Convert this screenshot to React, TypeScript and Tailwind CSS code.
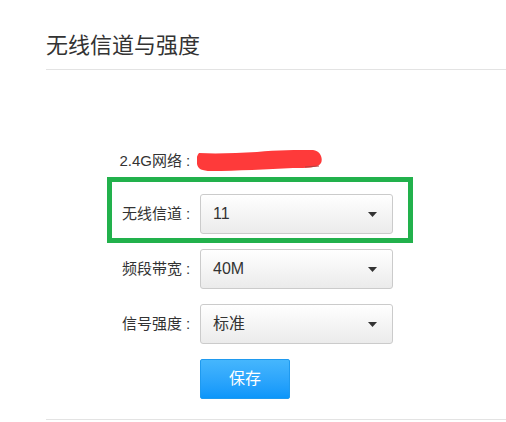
import React from "react";

const font = { fontFamily: '"Liberation Sans", "Noto Sans CJK SC", sans-serif' };

function Caret() {
  return (
    <svg width="9" height="5" viewBox="0 0 9 5" className="shrink-0">
      <path d="M0 0 H9 L4.5 5 Z" fill="#333" />
    </svg>
  );
}

function SelectBox({ value }: { value: string }) {
  return (
    <div className="w-[193px] h-[40px] border border-[#cbcbcb] rounded-[3px] bg-gradient-to-b from-white to-[#ebebeb] flex items-center justify-between pl-[12px] pr-[15px] text-[16px] text-[#333]">
      <span>{value}</span>
      <Caret />
    </div>
  );
}

function Row({ label, children }: { label: string; children: React.ReactNode }) {
  return (
    <div className="flex items-center h-[40px]">
      <div className="w-[154px] flex justify-end pr-[6px] text-[15px] text-[#333]">
        <span>{label}</span>
        <span className="w-[12px] text-center">:</span>
      </div>
      {children}
    </div>
  );
}

export default function App() {
  return (
    <div className="w-[506px] h-[422px] bg-white overflow-hidden pl-[46px]" style={font}>
      <div className="pt-[31px] pb-[8px] border-b border-[#e3e3e3]">
        <h1 className="text-[22px] leading-[30px] text-[#333] font-normal">无线信道与强度</h1>
      </div>

      <div className="mt-[71px] flex flex-col">
        <Row label="2.4G网络">
          {/* redacted network name */}
          <svg width="126" height="22" viewBox="0 0 126 22" className="-ml-[3px]">
            <path
              d="M2 3 C20 4 40 3 60 2 C80 0 100 0 116 0 C124 1 126 9 124 13 C121 18 110 18 96 18 C70 19 40 21 14 21 C5 21 1 19 0 14 C-1 9 0 5 2 3 Z"
              fill="#fe3a3a"
            />
            <path d="M108 17 L122 16" stroke="#b04040" strokeWidth="1" />
          </svg>
        </Row>

        <div className="relative mt-[13px]">
          <Row label="无线信道">
            <SelectBox value="11" />
          </Row>
          <div className="absolute left-[61px] top-[-17px] w-[306px] h-[66px] border-[5px] border-[#22b14c] pointer-events-none" />
        </div>

        <div className="mt-[15px]">
          <Row label="频段带宽">
            <SelectBox value="40M" />
          </Row>
        </div>

        <div className="mt-[15px]">
          <Row label="信号强度">
            <SelectBox value="标准" />
          </Row>
        </div>

        <div className="mt-[15px] pl-[154px]">
          <button className="w-[90px] h-[40px] rounded-[2px] border border-[#1f9aef] bg-gradient-to-b from-[#45b6fd] to-[#0a96fa] text-white text-[16px]">
            保存
          </button>
        </div>
      </div>

      <div className="mt-[20px] border-b border-[#e3e3e3]" />
    </div>
  );
}
